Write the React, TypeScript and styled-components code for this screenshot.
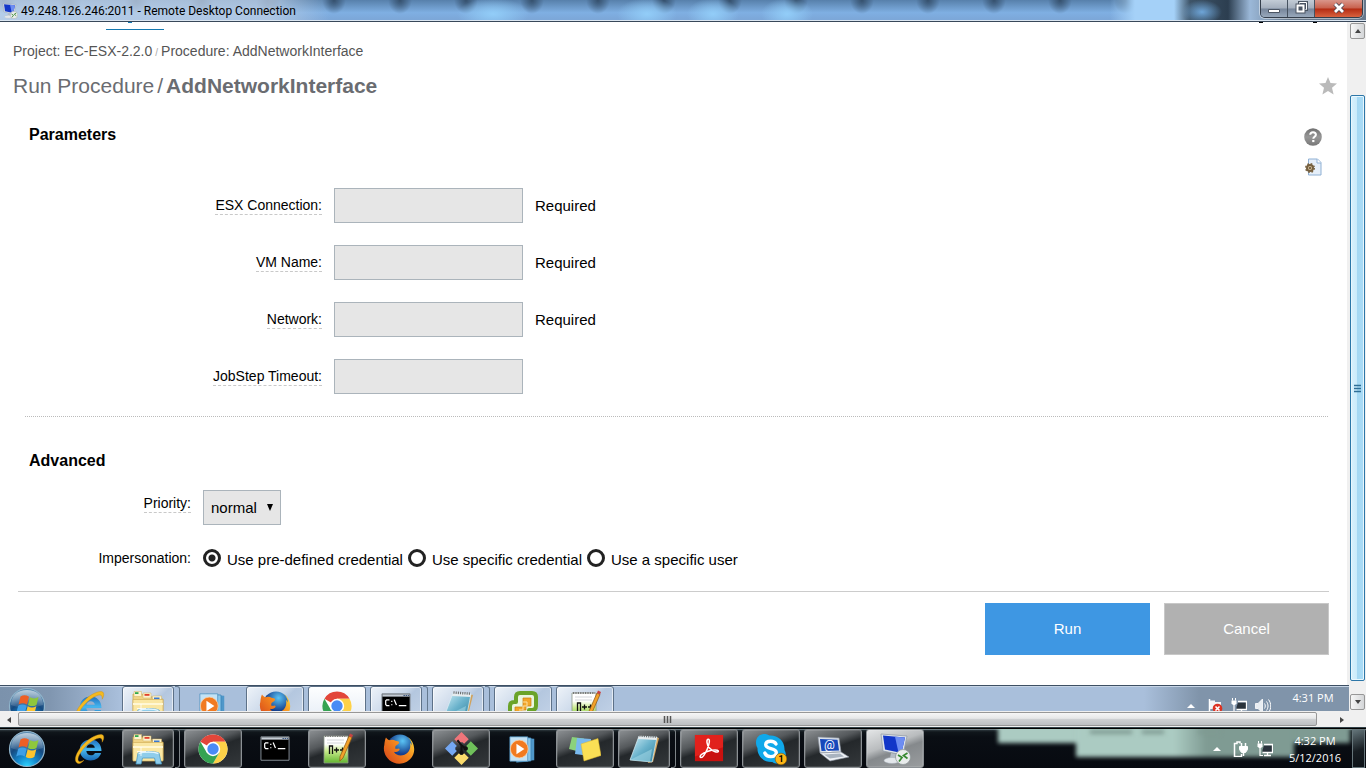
import React from "react";
import styled, { createGlobalStyle, css } from "styled-components";

const uiFont = `Roboto, "Open Sans", sans-serif`;
const clockFont = `"Open Sans", Roboto, sans-serif`;
const pageFont = `"Liberation Sans", Arial, sans-serif`;

const GlobalStyle = createGlobalStyle`
  *, *::before, *::after { box-sizing: border-box; }
  body { margin: 0; background: #fff; font-family: ${pageFont}; }
  button, input, select { font: inherit; margin: 0; padding: 0; border: 0; border-radius: 0; }
  svg { display: block; }
`;

const Desktop = styled.div`
  display: flex;
  flex-direction: column;
  min-height: 100vh;
  overflow: hidden;
`;

/* ---------- Window frame ---------- */

const TitleBar = styled.header`
  display: flex;
  align-items: flex-start;
  height: 22px;
  padding: 0 3px 0 2px;
  border-bottom: 1px solid #39485a;
  box-shadow: inset 0 -1px 0 #dbe6f1;
  background:
    linear-gradient(90deg, rgba(200, 216, 236, 0.75) 0, rgba(190, 208, 230, 0.75) 270px, transparent 330px),
    radial-gradient(ellipse 20px 12px at 1202px 12px, #6ea5d8, transparent),
    linear-gradient(90deg, transparent 1110px, #a5d1f8 1135px, #a5d1f8 1174px, #3e5468 1190px, #2c3e50 1228px, #9bb8d8 1250px, #66788c 1290px),
    radial-gradient(ellipse 36px 16px at 493px 14px, #92cdf8, transparent),
    radial-gradient(ellipse 30px 16px at 647px 14px, #92cdf8, transparent),
    radial-gradient(ellipse 26px 16px at 713px 14px, #92cdf8, transparent),
    radial-gradient(ellipse 26px 16px at 787px 14px, #92cdf8, transparent),
    radial-gradient(ellipse 12px 14px at 33px 0, #35506d, transparent) 433px 0 / 66px 22px repeat-x,
    linear-gradient(#5780ab, #7fafe2 60%, #7ba5d6);
`;

const TitleText = styled.h1`
  flex: 1;
  margin: 0 0 0 3px;
  font: 400 12px/22px ${uiFont};
  color: #000;
`;

const AppIcon = styled.span`
  margin-top: 3px;
`;

const CaptionButtons = styled.div`
  display: flex;
  height: 18px;
  border: 1px solid #343e4b;
  border-top: 0;
  border-radius: 0 0 5px 5px;
  overflow: hidden;
  box-shadow: 0 0 0 1px rgba(255, 255, 255, 0.45);
`;

const CaptionButton = styled.button<{ $danger?: boolean }>`
  display: flex;
  align-items: center;
  justify-content: center;
  width: ${(p) => (p.$danger ? 47 : 27)}px;
  padding-bottom: 2px;
  border-right: ${(p) => (p.$danger ? "0" : "1px solid #465260")};
  background: ${(p) =>
    p.$danger
      ? "linear-gradient(#d9968a, #c8604c 48%, #b32b12 52%, #d8623f)"
      : "linear-gradient(#c3ccd6, #a4afbd 48%, #76859a 52%, #98a8bb)"};
`;

const Body = styled.div`
  display: flex;
  flex: 1;
`;

const RemoteScreen = styled.div`
  display: flex;
  flex: 1;
  flex-direction: column;
  min-width: 0;
`;

/* ---------- Scroll bars ---------- */

const VerticalBar = styled.div`
  display: flex;
  flex-direction: column;
  width: 17px;
  padding: 1px 1px;
  background: #f0f0f0;
`;

const ArrowButton = styled.button<{ $flat?: boolean }>`
  display: flex;
  align-items: center;
  justify-content: center;
  width: ${(p) => (p.$flat ? 17 : 15)}px;
  height: 16px;
  background: ${(p) => (p.$flat ? "transparent" : "linear-gradient(90deg, #f6f6f6, #d4d6d8)")};
  border: ${(p) => (p.$flat ? "0" : "1px solid #979797")};
  border-radius: 2px;
`;

const VerticalThumb = styled.div`
  display: flex;
  flex: 1;
  align-items: center;
  justify-content: center;
  margin: 56px 0 13px;
  border: 1px solid #2d77a8;
  border-radius: 2px;
  box-shadow: inset 0 0 0 1px #e8f7fe;
  background: linear-gradient(90deg, #d9f1fd 0, #cbebfb 45%, #a6d8f3 50%, #a9dcf7 100%);
`;

const HorizontalBar = styled.div`
  display: flex;
  height: 17px;
  padding-top: 1px;
  border-bottom: 1px solid #2f3f46;
  background: #f0f0f0;
`;

const HorizontalThumb = styled.div`
  display: flex;
  flex: 1;
  align-items: center;
  justify-content: center;
  height: 14px;
  margin: 0 16px 0 1px;
  border: 1px solid #979797;
  border-radius: 2px;
  background: linear-gradient(#f6f6f6, #e6e7e8 45%, #cfd1d3 50%, #bcbfc2);
`;

const Corner = styled.div`
  width: 16px;
`;

/* ---------- Web page ---------- */

const Page = styled.main`
  flex: 1;
  padding: 0 18px 30px 13px;
  border-right: 2px solid #f0f0f0;
  background: #fff;
  font-size: 15px;
  line-height: 20px;
  color: #000;
`;

const NavEdge = styled.div`
  display: flex;
  align-items: flex-start;
  height: 8px;
`;

const ActiveTab = styled.div`
  display: flex;
  justify-content: center;
  width: 58px;
  height: 8px;
  margin: 0 auto 0 93px;
  padding-right: 10px;
  border-bottom: 1px solid #1478b0;
`;

const Speck = styled.i<{ $color: string; $gap?: number }>`
  width: 4px;
  height: 1px;
  margin-right: ${(p) => p.$gap ?? 0}px;
  background: ${(p) => p.$color};
`;

const Breadcrumb = styled.nav`
  margin-top: 11px;
  font-size: 14px;
  color: #555;

  a { color: inherit; text-decoration: none; }
  span { margin: 0 3px; font-size: 10px; color: #aaa; }
`;

const Heading = styled.div`
  display: flex;
  align-items: center;
  justify-content: space-between;
  margin: 11px -8px 0 0;
`;

const HeadingText = styled.h2`
  margin: 0;
  font-size: 21px;
  font-weight: 400;
  line-height: 24px;
  color: #6a6c71;

  span { margin: 0 3px; }
`;

const IconButton = styled.button`
  display: block;
  background: none;
`;

const Section = styled.section<{ $top: number }>`
  display: flex;
  margin-top: ${(p) => p.$top}px;
  padding-left: 16px;
`;

const SectionMain = styled.div`
  flex: 1;
`;

const SectionTitle = styled.h3`
  margin: 0;
  font-size: 16px;
  line-height: 20px;
`;

const SectionTools = styled.div`
  display: flex;
  flex-direction: column;
  gap: 12px;
  padding: 3px 7px 0 0;
`;

const ParameterList = styled.div`
  display: flex;
  flex-direction: column;
  gap: 22px;
  margin-top: 43px;
`;

const Field = styled.div<{ $labelWidth: number; $top?: number }>`
  display: grid;
  grid-template-columns: ${(p) => p.$labelWidth}px auto 1fr;
  align-items: center;
  column-gap: 12px;
  margin-top: ${(p) => p.$top ?? 0}px;
`;

const Label = styled.label<{ $plain?: boolean; $raised?: boolean }>`
  justify-self: end;
  margin-bottom: ${(p) => (p.$raised ? 8 : 0)}px;
  font-size: 14px;
  line-height: 18px;
  white-space: nowrap;
  border-bottom: ${(p) => (p.$plain ? "0" : "1px dashed #c9c9c9")};
`;

const TextInput = styled.input`
  width: 189px;
  height: 35px;
  padding: 0 8px;
  border: 1px solid #abb4bb;
  background: #e6e6e6;
`;

const SelectBox = styled.div`
  position: relative;

  &::after {
    content: "";
    position: absolute;
    top: 14px;
    right: 8px;
    border: 3px solid transparent;
    border-top: 7px solid #000;
    border-bottom: 0;
    pointer-events: none;
  }
`;

const Select = styled.select`
  appearance: none;
  display: block;
  width: 78px;
  height: 35px;
  padding: 0 7px;
  border: 1px solid #abb4bb;
  background: #e6e6e6;
  color: #000;
`;

const DottedRule = styled.hr`
  height: 0;
  margin: 22px 1px 0 12px;
  border: 0;
  border-top: 1px dotted #bbb;
`;

const SolidRule = styled.hr`
  height: 0;
  margin: 23px 0 0 5px;
  border: 0;
  border-top: 1px solid #ccc;
`;

const RadioRow = styled.div`
  display: flex;
  gap: 5px;
`;

const RadioLabel = styled.label`
  display: flex;
  align-items: center;
  gap: 6px;
  height: 20px;
  white-space: nowrap;

  span { padding-top: 3px; }
`;

const Radio = styled.input`
  appearance: none;
  width: 18px;
  height: 18px;
  border: 3px solid #222;
  border-radius: 50%;
  background: #fff;

  &:checked {
    background: radial-gradient(circle, #222 0, #222 3px, #fff 4px);
  }
`;

const Actions = styled.div`
  display: flex;
  justify-content: flex-end;
  gap: 14px;
  margin-top: 11px;
`;

const ActionButton = styled.button<{ $primary?: boolean }>`
  width: 165px;
  height: 52px;
  border: 1px solid ${(p) => (p.$primary ? "#3e97e3" : "#c8c8c8")};
  background: ${(p) => (p.$primary ? "#3e97e3" : "#b1b1b1")};
  color: #fff;
`;

/* ---------- Task bars ---------- */

const barDark = css`
  background: linear-gradient(#39454b, #10161b 3px, #0a0e14 8px, #070a10);
`;

const barLight = css`
  background:
    linear-gradient(90deg, #7b92ac 0, #8096b0 50px, transparent 120px),
    linear-gradient(270deg, #8094aa 0, #8094aa 150px, transparent 205px),
    #a9bfdb;
`;

const TaskClip = styled.div`
  height: 26px;
  overflow: hidden;
`;

const TaskBarBox = styled.footer<{ $light?: boolean }>`
  position: relative;
  display: flex;
  height: 40px;
  border-top: 1px solid ${(p) => (p.$light ? "#3d4f63" : "#000")};
  box-shadow: inset 0 1px 0 ${(p) => (p.$light ? "#c7d5e6" : "#6c7a80")};
  ${(p) => (p.$light ? barLight : barDark)}
`;

const Glow = styled.div`
  position: absolute;
  inset: 0;
  overflow: hidden;
`;

const GlowPatch = styled.i<{ $right: number; $top: number; $width: number; $height: number; $fill: string }>`
  position: absolute;
  top: ${(p) => p.$top}px;
  right: ${(p) => p.$right}px;
  width: ${(p) => p.$width}px;
  height: ${(p) => p.$height}px;
  background: ${(p) => p.$fill};
  filter: blur(2px);
`;

const StartButton = styled.button`
  display: flex;
  align-items: center;
  width: 60px;
  padding-left: 8px;
  background: none;
`;

const Tasks = styled.div`
  display: flex;
  flex: 1;
  gap: 4px;
`;

type Look = "none" | "open" | "stack" | "active";

const TaskSlot = styled.div<{ $light?: boolean; $look: Look }>`
  display: flex;
  gap: 1px;
  width: 58px;

  &::after {
    content: "";
    display: ${(p) => (p.$look === "stack" ? "block" : "none")};
    width: 5px;
    border: 1px solid ${(p) => (p.$light ? "#64798f" : "#7d8387")};
    border-left: 0;
    border-radius: 0 3px 3px 0;
  }
`;

const openDark = "linear-gradient(160deg, #8d9194 0, #55595c 35%, #24282b 50%, #34383b 100%)";
const activeDark = "linear-gradient(160deg, #e4e6e7 0, #b9bcbe 40%, #85898c 55%, #9a9d9f 100%)";
const openLight = "linear-gradient(135deg, #eef3f9 0, #c9d7e9 45%, #b4c7df 55%, #c5d4e8 100%)";
const activeLight = "linear-gradient(#fdfeff, #e3ebf5)";

const TaskButton = styled.button<{ $light?: boolean; $look: Look }>`
  display: flex;
  flex: 1;
  align-items: center;
  justify-content: center;
  background: none;
  ${(p) =>
    p.$look !== "none" &&
    css`
      border: 1px solid ${p.$light ? "#5d7188" : "#8b9094"};
      border-radius: 3px;
      box-shadow: inset 0 0 0 1px ${p.$light ? "rgba(255,255,255,.6)" : "rgba(255,255,255,.12)"};
      background: ${p.$look === "active" ? (p.$light ? activeLight : activeDark) : p.$light ? openLight : openDark};
    `}
`;

const Tray = styled.div<{ $right: number }>`
  position: relative;
  display: flex;
  align-items: center;
  gap: 8px;
  padding-right: ${(p) => p.$right}px;
`;

const TrayToggle = styled.button`
  margin-right: 4px;
  background: none;
`;

const Clock = styled.time`
  width: 68px;
  padding-top: 3px;
  font: 400 11px/17px ${clockFont};
  text-align: center;
  white-space: nowrap;
  color: #fff;
  align-self: flex-start;

  span { display: block; }
`;

const ShowDesktop = styled.button`
  position: relative;
  width: 13px;
  margin-right: 1px;
  border: 1px solid #66757a;
  background: linear-gradient(160deg, #64757a, #171d22 55%, #0d1217);
`;

/* ---------- Icons ---------- */

const Icon = ({ children, size = 32 }: { children: React.ReactNode; size?: number }) => (
  <svg width={size} height={size} viewBox="0 0 32 32" aria-hidden="true">{children}</svg>
);

const StartOrb = () => (
  <svg width="38" height="38" viewBox="0 0 38 38" aria-hidden="true">
    <defs>
      <radialGradient id="orb" cx=".5" cy="1" r="1">
        <stop offset="0" stopColor="#2fd6ff" />
        <stop offset=".3" stopColor="#1488cd" />
        <stop offset=".6" stopColor="#164a80" />
        <stop offset="1" stopColor="#5f8fb3" />
      </radialGradient>
      <linearGradient id="orbShine" x2="0" y2="1">
        <stop offset="0" stopColor="#fff" stopOpacity=".6" />
        <stop offset="1" stopColor="#fff" stopOpacity=".08" />
      </linearGradient>
    </defs>
    <circle cx="19" cy="19" r="17.5" fill="url(#orb)" stroke="#8fb4cb" strokeWidth="1.2" />
    <path d="M3 18C3 8 10 3 19 3s16 5 16 15c-8 3-22 4-32 0z" fill="url(#orbShine)" />
    <path d="M12.500 9.500c3-1.800 5.500-1.600 8.500.2L19 17.500c-3-1.700-5.600-1.600-8.400-.1z" fill="#ee5f25" />
    <path d="M22 10.300c3 1.600 5.500 1.500 8.500-.2l-2 7.800c-3 1.600-5.500 1.600-8.500 0z" fill="#8fc73c" />
    <path d="M10.200 18.700c2.800-1.600 5.400-1.500 8.500.1l-2 7.700c-3-1.700-5.600-1.600-8.500-.1z" fill="#3f9fe6" />
    <path d="M19.700 19.200c3 1.600 5.500 1.600 8.600 0l-2 7.700c-3 1.700-5.600 1.600-8.600 0z" fill="#fdc42f" />
  </svg>
);

const IeIcon = () => (
  <Icon>
    <defs>
      <linearGradient id="ie" x2="0" y2="1">
        <stop offset="0" stopColor="#1e6fc0" /><stop offset=".5" stopColor="#47b7ef" /><stop offset="1" stopColor="#1667b4" />
      </linearGradient>
    </defs>
    <path d="M17.500 6.500c6.500 0 11 4.500 11 11.500H13.300c.3 2.800 2.200 4.300 4.600 4.300 2 0 3.300-.8 4-2.300h6.200c-1.400 4.600-5.300 7.500-10.400 7.500-6.200 0-10.900-4.300-10.900-10.400S11.500 6.500 17.500 6.500zm-4 8.300h8.300c-.3-2.300-1.900-3.600-4.100-3.600s-3.800 1.300-4.200 3.600z" fill="url(#ie)" />
    <path d="M5 30.500C-1 28 4 17 13 9 20 2.500 29-.5 30.500 3c.6 1.600 0 4-1.300 6.200C29.500 5.500 28 4 24 5.500 15 9 5 20.500 5 26.500c0 2.700 2.500 2.700 6 .8-2.500 2.500-4.500 3.700-6 3.200z" fill="#f4b91f" stroke="#c98a10" strokeWidth=".4" />
  </Icon>
);

const ExplorerIcon = () => (
  <Icon>
    <path d="M1 4h9l1.500 2H19l1 3h11v18H1z" fill="#f0d486" stroke="#c9a44a" strokeWidth=".7" />
    <path d="M2 1.500h7.500v5H2zM11 3h8v5h-8zM20.500 6h9v5h-9z" fill="#fdf4cf" stroke="#d2b362" strokeWidth=".5" />
    <path d="M3 2.200h3.500V4H3z" fill="#2ea84a" /><path d="M12.500 4h5v1.800h-5z" fill="#e0402c" /><path d="M22 7.500h5.500v1.800H22z" fill="#3978cf" />
    <path d="M1 9.500h30V28H1z" fill="#fae7a3" stroke="#d2b05a" strokeWidth=".7" />
    <path d="M1 14h30" stroke="#fff7d4" strokeWidth="2" />
    <path d="M6 20c5-2 16-2 21 0l2.500 11H24l-1.500-6h-12L9 31H4z" fill="#8fcdeb" stroke="#4d9bc4" strokeWidth=".8" />
    <path d="M6.500 20.500c5-2 15-2 20 0" stroke="#e2f6ff" strokeWidth="1.500" fill="none" />
    <path d="M9 14v9M5 18.500h9" stroke="#fff" strokeWidth=".8" />
  </Icon>
);

const ChromeIcon = () => (
  <Icon>
    <circle cx="16" cy="16" r="14.500" fill="#fff" />
    <path d="M16 16L3.440 8.750A14.500 14.500 0 0 1 28.560 8.750H16z" fill="#e2463a" />
    <path d="M28.560 8.750A14.500 14.500 0 0 1 16 30.500L22.300 19.600 16 8.750z" fill="#fdd148" />
    <path d="M3.440 8.750A14.500 14.500 0 0 0 16 30.500L22.300 19.600H16L9.700 19.600z" fill="#35a352" />
    <circle cx="16" cy="16" r="7.200" fill="#fff" />
    <circle cx="16" cy="16" r="5.700" fill="#4a8bf5" />
  </Icon>
);

const CmdIcon = () => (
  <Icon size={30}>
    <path d="M1 3h30v25H1z" fill="#000" stroke="#8a929b" />
    <path d="M1.500 3.500h29V6h-29z" fill="#c4ccd5" />
    <path d="M24 4.200h1.500v1H24zM26.300 4.200h1.500v1h-1.500zM28.600 4.200h1.200v1h-1.200z" fill="#35517b" />
    <path d="M9 9.500H6l-1 1v4l1 1h3M11.500 10.500v1.200M11.500 14v1.200M14 9l2.500 6M19 15.500h8" fill="none" stroke="#fff" strokeWidth="1.300" />
  </Icon>
);

const NppIcon = () => (
  <Icon>
    <defs>
      <linearGradient id="npp" x2="0" y2="1"><stop offset=".3" stopColor="#fff" /><stop offset=".55" stopColor="#c9eb8c" /><stop offset="1" stopColor="#62b52f" /></linearGradient>
    </defs>
    <path d="M3 3h24v27H3z" fill="url(#npp)" stroke="#8c9788" strokeWidth=".8" />
    <path d="M4 3h22" stroke="#777" strokeWidth="2" strokeDasharray="1.200 1.200" />
    <path d="M6 7h17M6 10h17" stroke="#c9cdd2" strokeWidth=".8" />
    <path d="M8.500 21v-8h3v8M13 17h5M15.500 14.500v5M19 17h5M21.500 14.500v5" fill="none" stroke="#111" strokeWidth="1.300" />
    <path d="M28 3l3 1.500L22 25l-3.200 3 .2-4.500z" fill="#f2a12a" stroke="#8a5311" strokeWidth=".7" />
    <path d="M28 3l1-2.500 3 1.500-1 2.500z" fill="#c74343" />
  </Icon>
);

const FirefoxIcon = () => (
  <Icon>
    <defs>
      <radialGradient id="ffGlobe" cx=".6" cy=".25"><stop offset="0" stopColor="#5bc4f5" /><stop offset="1" stopColor="#153f8e" /></radialGradient>
      <linearGradient id="ffFox" x1="1" x2="0" y2=".8"><stop offset="0" stopColor="#fde03d" /><stop offset=".45" stopColor="#f58b1f" /><stop offset="1" stopColor="#d94a1a" /></linearGradient>
    </defs>
    <circle cx="17" cy="14.500" r="13" fill="url(#ffGlobe)" />
    <path d="M3 4.500c1 1.500 2 2.500 4 2.800 2-.8 4-.5 5.500.5l3 .8c1 .7.500 2-.5 2.700l-2.500 1.700-.3 2.500c1 .5 2.500.2 3.700 0 1 .5 1 1.500-.4 2.600-1.600 1.300-3.600 1-4.600.6 2 3.700 6.600 4.600 10.600 3 4.500-2 6.600-6.500 5.500-11.700 1 .8 1.500 1.500 2 2.500-.5-4-2-6.500-4.500-8.500C31 8 33 16.500 29.500 23c-3.700 6.600-12 9.500-19 6.500C3.500 26.500-.5 19 1.300 12 1.600 9 2 6.500 3 4.500z" fill="url(#ffFox)" />
  </Icon>
);

const GitIcon = () => (
  <Icon size={33}>
    <path d="M16 0l7 7-4.500 4.500L17 10h-2l-1.500 1.500L9 7z" fill="#f0757a" />
    <path d="M25 9l7 7-7 7-4.500-4.500L22 17v-2l-1.500-1.500z" fill="#6fc05a" />
    <path d="M23 25l-7 7-7-7 4.500-4.500L15 22h2l1.500-1.500z" fill="#fadb6c" />
    <path d="M7 23l-7-7 7-7 4.500 4.500L10 15v2l1.500 1.500z" fill="#74a7f2" />
    <path d="M12 8l4 5v7M16 13l4 3" stroke="#111" strokeWidth="2" fill="none" />
    <circle cx="16" cy="20" r="2" fill="#111" /><circle cx="20" cy="16" r="2" fill="#111" />
  </Icon>
);

const WmpIcon = () => (
  <Icon size={30}>
    <path d="M12 4l16 1v23l-16 1z" fill="#4f97c9" />
    <path d="M9 3.500l15.500.8v24.400L9 30z" fill="#8cc7ea" stroke="#3b83b5" strokeWidth=".8" />
    <path d="M2 3h19v26H2z" fill="#c3e2f5" stroke="#4b90bf" strokeWidth=".8" />
    <circle cx="12" cy="16" r="9.500" fill="#f17a20" stroke="#fbd3a8" strokeWidth=".8" />
    <path d="M9 10.500v11l8.500-5.500z" fill="#fff" />
  </Icon>
);

const StickyIcon = () => (
  <Icon>
    <path d="M3 4l12 1.500-1.500 14L0 16z" fill="#8bd27c" />
    <path d="M8 5l14 1-1 17-15-2z" fill="#79b9ee" />
    <path d="M12 11l17-5.500 3 17L15 28z" fill="#fadf55" stroke="#e0b92e" strokeWidth=".5" />
  </Icon>
);

const NotepadIcon = () => (
  <Icon>
    <defs>
      <linearGradient id="pad" x2="1" y2="1"><stop offset="0" stopColor="#d4f0f8" /><stop offset=".5" stopColor="#6bb3cc" /><stop offset="1" stopColor="#2f7f9d" /></linearGradient>
    </defs>
    <path d="M27 4l4 1-6 24-5 1z" fill="#d1a25c" />
    <path d="M11 3l18 1-5 25-22-2z" fill="url(#pad)" stroke="#dceff5" strokeWidth=".7" />
    <path d="M11 3l18 1-.6 3L10 6z" fill="#e6ecef" />
    <path d="M11.500 2.500L28 3.700" stroke="#666" strokeWidth="2.500" strokeDasharray="1 1.200" />
    <path d="M2 27l22-11-2 13z" fill="#9fd5e4" opacity=".6" />
  </Icon>
);

const VmwareIcon = () => (
  <Icon>
    <path d="M13 3h12q4 0 4 4v9q0 4-4 4h-3v5q0 4-4 4H7q-4 0-4-4v-9q0-4 4-4h2V7q0-4 4-4z" fill="#eaf5e0" stroke="#6aa329" strokeWidth="4" strokeLinejoin="round" />
    <path d="M16 8h8v8h-5v4h-4v5H8v-8h8z" fill="#f2a52a" stroke="#c87c0e" strokeWidth=".7" />
    <path d="M16 12h4v4h-4v4h-4" stroke="#fde0a0" fill="none" />
  </Icon>
);

const AdobeIcon = () => (
  <Icon size={30}>
    <path d="M1 1h30v28H1z" fill="#c9110f" /><path d="M1 1h30v13L1 24z" fill="#e1211c" />
    <path d="M7 25c-2-1 2-5 8-6.700 5-1.500 11-1.800 11 0 0 2-6 .7-9.500-3.300C13.500 11.500 13 6 15 5.500c2.300-.3 1.500 5-.8 10.500C12 21 9 26 7 25z" fill="none" stroke="#fff" strokeWidth="1.600" />
  </Icon>
);

const SkypeIcon = () => (
  <Icon size={32}>
    <path d="M9 1c2.500 0 4 .7 5.500 1.500C23 2 30 8 29.500 17c1 1.500 1.300 3.200 1.300 5 0 5-4 8.500-8.500 8.500-1.800 0-3.500-.5-5-1.500C8.500 29.500 2 23 2.500 15 1.500 13.500 1 11.500 1 9.500 1 4.500 4.500 1 9 1z" fill="#10a8ea" />
    <path d="M21 11c-1-2-3-2.800-5.300-2.800-2.900 0-5 1.300-5 3.600 0 5 10.600 2.600 10.600 7.800 0 2.500-2.300 4-5.500 4-3 0-5-1.300-6-3.600" fill="none" stroke="#fff" strokeWidth="3.400" strokeLinecap="round" />
    <circle cx="26" cy="26" r="5.800" fill="#fdb515" stroke="#8b5c00" strokeWidth=".6" />
    <text x="26" y="29" fontSize="9" fontWeight="700" textAnchor="middle" fontFamily="Roboto, sans-serif">1</text>
  </Icon>
);

const MailIcon = () => (
  <Icon>
    <path d="M1 4l21 1 2 14-21 1z" fill="#d9dfe7" stroke="#8d96a3" strokeWidth=".6" />
    <path d="M3 6l17.500.8L22 17.500 4.500 18z" fill="#1748bb" />
    <text x="12.500" y="16" fontSize="12" fill="#fff" textAnchor="middle" fontFamily="Roboto, sans-serif">@</text>
    <path d="M3 20l21-1 8 5-19 4z" fill="#eef1f5" stroke="#8d96a3" strokeWidth=".6" />
    <path d="M7 21.500l16-1 4 3-14 2z" fill="#a9b3bf" />
  </Icon>
);

const RdpIcon = ({ size = 32 }: { size?: number }) => (
  <Icon size={size}>
    <path d="M2 1l26 2-4 19-20-4z" fill="#dfe4ea" stroke="#8b95a2" strokeWidth=".7" />
    <path d="M4 2.500l22 2L22.500 20 6 16.500z" fill="#1236c8" />
    <path d="M16 3.700l10 .8L22.500 20l-3-.6z" fill="#6d8df2" />
    <path d="M12 20l5 1-1 4h-5z" fill="#b4bcc6" /><ellipse cx="13" cy="27.500" rx="8" ry="3" fill="#e3e7eb" stroke="#a2abb5" strokeWidth=".5" />
    <circle cx="24" cy="24" r="7.500" fill="#e9ecec" stroke="#8e9698" strokeWidth=".7" />
    <path d="M19 22l4 2.500-3 4M28.500 20l-4 2.500 4 3" fill="none" stroke="#36892f" strokeWidth="1.700" />
  </Icon>
);

const StarIcon = () => (
  <svg width="18" height="18" viewBox="0 0 18 18" aria-hidden="true">
    <path d="M9 0l2.500 6 6.500.5-5 4.200 1.600 6.800L9 14l-5.600 3.500L5 10.700 0 6.500 6.500 6z" fill="#bababa" />
  </svg>
);

const HelpIcon = () => (
  <svg width="18" height="18" viewBox="0 0 18 18" aria-hidden="true">
    <defs><linearGradient id="help" x2="0" y2="1"><stop offset="0" stopColor="#6f6f6f" /><stop offset=".5" stopColor="#979797" /><stop offset="1" stopColor="#777" /></linearGradient></defs>
    <circle cx="9" cy="9" r="8.800" fill="url(#help)" />
    <path d="M6.200 6.800C6.300 5 7.500 4.200 9 4.200s2.900.9 2.900 2.500c0 2-2.600 2-2.600 4" fill="none" stroke="#fff" strokeWidth="2" />
    <path d="M8.200 12h2.200v2.100H8.200z" fill="#fff" />
  </svg>
);

const DocumentIcon = () => (
  <svg width="18" height="18" viewBox="0 0 18 18" aria-hidden="true">
    <path d="M4.500 1h9L17 4.500V17H4.500z" fill="#e6eff9" stroke="#8fb0d4" />
    <path d="M13 1v4h4" fill="#fff" stroke="#8fb0d4" />
    <circle cx="6" cy="10" r="3" fill="#d2bd98" stroke="#76603f" strokeWidth="2" />
    <circle cx="6" cy="10" r="4.300" fill="none" stroke="#76603f" strokeWidth="1.400" strokeDasharray="1.700 1.700" />
    <circle cx="6" cy="10" r="1" fill="#5d4a2d" />
  </svg>
);

const Arrow = ({ path, color = "#444" }: { path: string; color?: string }) => (
  <svg width="8" height="8" viewBox="0 0 8 8" aria-hidden="true"><path d={path} fill={color} /></svg>
);

const Grip = ({ vertical, color }: { vertical?: boolean; color: string }) => (
  <svg width="9" height="9" viewBox="0 0 9 9" aria-hidden="true">
    <path d={vertical ? "M1 1.500h7M1 4.500h7M1 7.500h7" : "M1.500 1v7M4.500 1v7M7.500 1v7"} stroke={color} strokeWidth="1.500" />
  </svg>
);

const TrayIcon = ({ children }: { children: React.ReactNode }) => (
  <svg width="16" height="16" viewBox="0 0 16 16" fill="none" stroke="#fff" aria-hidden="true">{children}</svg>
);

const FlagIcon = () => (
  <TrayIcon>
    <path d="M2.500 1v15" strokeWidth="1.500" />
    <path d="M3 2.500h5v1.500h6v7H3z" fill="#f2f4f6" stroke="none" />
    <circle cx="10.500" cy="10.500" r="4.800" fill="#dc3322" stroke="none" />
    <path d="M8.500 8.500l4 4M12.500 8.500l-4 4" strokeWidth="1.600" />
  </TrayIcon>
);

const NetworkIcon = () => (
  <TrayIcon>
    <path d="M7 4.500h8.500v7H5.500V9z" fill="#2a333c" stroke="none" />
    <path d="M1.500 0v2.500M4.500 0v2.500" />
    <path d="M.5 2.500h5v3l-1.500 1.500h-2L.5 5.500z" fill="#fff" stroke="none" />
    <path d="M3 6v8.500h3" strokeWidth="1.200" />
    <path d="M7 3.500h8.500v8H5.500M10.500 12v2.500M7 14.500h7" strokeWidth="1.300" />
  </TrayIcon>
);

const SoundIcon = () => (
  <TrayIcon>
    <path d="M.5 5.500H3L7.500 1v14L3 10.500H.5z" fill="#e8edf2" strokeWidth=".8" />
    <path d="M9.500 5.500c1 1.500 1 3.500 0 5M11.500 3.500c2 3 2 6 0 9M13.500 1.500c3 4 3 9 0 13" />
  </TrayIcon>
);

const PowerIcon = () => (
  <TrayIcon>
    <path d="M7 2.500V1H4v1.500H1.500v13h7V13" strokeWidth="1.500" />
    <path d="M8.500 2v4M12.500 2v4M10.500 11v4" strokeWidth="1.500" />
    <path d="M6.500 5.500h8v3l-2 3h-4l-2-3z" fill="#fff" />
  </TrayIcon>
);

/* ---------- Composition ---------- */

interface Task { name: string; look: Look; icon: React.ReactNode }

const remoteTasks: Task[] = [
  { name: "Internet Explorer", look: "none", icon: <IeIcon /> },
  { name: "Windows Explorer", look: "stack", icon: <ExplorerIcon /> },
  { name: "Media Player", look: "none", icon: <WmpIcon /> },
  { name: "Firefox", look: "open", icon: <FirefoxIcon /> },
  { name: "Chrome", look: "active", icon: <ChromeIcon /> },
  { name: "Command Prompt", look: "stack", icon: <CmdIcon /> },
  { name: "Notepad", look: "stack", icon: <NotepadIcon /> },
  { name: "vSphere Client", look: "open", icon: <VmwareIcon /> },
  { name: "Notepad++", look: "open", icon: <NppIcon /> },
];

const localTasks: Task[] = [
  { name: "Internet Explorer", look: "none", icon: <IeIcon /> },
  { name: "Windows Explorer", look: "stack", icon: <ExplorerIcon /> },
  { name: "Chrome", look: "open", icon: <ChromeIcon /> },
  { name: "Command Prompt", look: "none", icon: <CmdIcon /> },
  { name: "Notepad++", look: "open", icon: <NppIcon /> },
  { name: "Firefox", look: "none", icon: <FirefoxIcon /> },
  { name: "Git", look: "open", icon: <GitIcon /> },
  { name: "Media Player", look: "none", icon: <WmpIcon /> },
  { name: "Sticky Notes", look: "open", icon: <StickyIcon /> },
  { name: "Notepad", look: "stack", icon: <NotepadIcon /> },
  { name: "Adobe Reader", look: "open", icon: <AdobeIcon /> },
  { name: "Skype", look: "open", icon: <SkypeIcon /> },
  { name: "Mail", look: "open", icon: <MailIcon /> },
  { name: "Remote Desktop Connection", look: "active", icon: <RdpIcon /> },
];

const TaskList = ({ tasks, light }: { tasks: Task[]; light?: boolean }) => (
  <>
    <StartButton aria-label="Start"><StartOrb /></StartButton>
    <Tasks>
      {tasks.map((t) => (
        <TaskSlot key={t.name} $look={t.look} $light={light}>
          <TaskButton $look={t.look} $light={light} aria-label={t.name}>{t.icon}</TaskButton>
        </TaskSlot>
      ))}
    </Tasks>
  </>
);

const parameters = [
  { id: "connection", label: "ESX Connection:", required: true },
  { id: "vm", label: "VM Name:", required: true },
  { id: "network", label: "Network:", required: true },
  { id: "timeout", label: "JobStep Timeout:", required: false },
];

const credentials = ["Use pre-defined credential", "Use specific credential", "Use a specific user"];

const RunProcedure = () => (
  <Page>
    <NavEdge>
      <ActiveTab><Speck $color="#1478b0" /></ActiveTab>
      <Speck $color="#000" $gap={50} />
      <Speck $color="#000" $gap={12} />
    </NavEdge>
    <Breadcrumb>
      <a href="#project">Project: EC-ESX-2.2.0</a><span>/</span><a href="#procedure">Procedure: AddNetworkInterface</a>
    </Breadcrumb>
    <Heading>
      <HeadingText>Run Procedure<span>/</span><b>AddNetworkInterface</b></HeadingText>
      <IconButton aria-label="Favorite"><StarIcon /></IconButton>
    </Heading>

    <Section $top={27}>
      <SectionMain>
        <SectionTitle>Parameters</SectionTitle>
        <ParameterList>
          {parameters.map((p) => (
            <Field key={p.id} $labelWidth={293}>
              <Label htmlFor={p.id}>{p.label}</Label>
              <TextInput id={p.id} type="text" />
              {p.required && <span>Required</span>}
            </Field>
          ))}
        </ParameterList>
      </SectionMain>
      <SectionTools>
        <IconButton aria-label="Help"><HelpIcon /></IconButton>
        <IconButton aria-label="Procedure details"><DocumentIcon /></IconButton>
      </SectionTools>
    </Section>
    <DottedRule />

    <Section $top={34}>
      <SectionMain>
        <SectionTitle>Advanced</SectionTitle>
        <Field $labelWidth={162} $top={19}>
          <Label htmlFor="priority" $raised>Priority:</Label>
          <SelectBox>
            <Select id="priority" defaultValue="normal">
              <option value="normal">normal</option>
            </Select>
          </SelectBox>
        </Field>
        <Field $labelWidth={162} $top={23} role="radiogroup" aria-labelledby="impersonation">
          <Label as="span" id="impersonation" $plain>Impersonation:</Label>
          <RadioRow>
            {credentials.map((c, i) => (
              <RadioLabel key={c}>
                <Radio type="radio" name="credential" defaultChecked={i === 0} />
                <span>{c}</span>
              </RadioLabel>
            ))}
          </RadioRow>
        </Field>
      </SectionMain>
    </Section>
    <SolidRule />
    <Actions>
      <ActionButton $primary>Run</ActionButton>
      <ActionButton>Cancel</ActionButton>
    </Actions>
  </Page>
);

export default function App() {
  return (
    <Desktop>
      <GlobalStyle />
      <TitleBar>
        <AppIcon><RdpIcon size={16} /></AppIcon>
        <TitleText>49.248.126.246:2011 - Remote Desktop Connection</TitleText>
        <CaptionButtons>
          <CaptionButton aria-label="Minimize">
            <svg width="12" height="12"><path d="M.5 7.500h11v3H.5z" fill="#fff" stroke="#4b5563" /></svg>
          </CaptionButton>
          <CaptionButton aria-label="Restore">
            <svg width="13" height="13"><path d="M4.500 1.500h7v7h-7z" fill="none" stroke="#4b5563" strokeWidth="3" /><path d="M4.500 1.500h7v7h-7z" fill="none" stroke="#fff" /><path d="M2.500 4.500h6v6h-6z" fill="#4b5563" stroke="#4b5563" strokeWidth="4" /><path d="M2.500 4.500h6v6h-6z" fill="#4b5563" stroke="#fff" strokeWidth="2" /></svg>
          </CaptionButton>
          <CaptionButton aria-label="Close" $danger>
            <svg width="12" height="12"><path d="M2 2l8 8M10 2l-8 8" stroke="#4b4350" strokeWidth="4.500" /><path d="M2 2l8 8M10 2l-8 8" stroke="#fff" strokeWidth="2.800" /></svg>
          </CaptionButton>
        </CaptionButtons>
      </TitleBar>

      <Body>
        <RemoteScreen>
          <RunProcedure />
          <TaskClip>
            <TaskBarBox $light>
              <TaskList tasks={remoteTasks} light />
              <Tray $right={2}>
                <TrayToggle aria-label="Show hidden icons"><Arrow path="M0 6l4-4 4 4z" color="#fff" /></TrayToggle>
                <FlagIcon /><NetworkIcon /><SoundIcon />
                <Clock><span>4:31 PM</span><span>5/12/2016</span></Clock>
              </Tray>
            </TaskBarBox>
          </TaskClip>
        </RemoteScreen>
        <VerticalBar>
          <ArrowButton aria-label="Scroll up"><Arrow path="M1 6l3-4 3 4z" /></ArrowButton>
          <VerticalThumb><Grip vertical color="#2f6f98" /></VerticalThumb>
          <ArrowButton aria-label="Scroll down"><Arrow path="M1 2h6L4 6z" /></ArrowButton>
        </VerticalBar>
      </Body>

      <HorizontalBar>
        <ArrowButton $flat aria-label="Scroll left"><Arrow path="M6 1v6L2 4z" /></ArrowButton>
        <HorizontalThumb><Grip color="#555" /></HorizontalThumb>
        <ArrowButton $flat aria-label="Scroll right"><Arrow path="M2 1v6l4-3z" /></ArrowButton>
        <Corner />
      </HorizontalBar>

      <TaskBarBox>
        <Glow>
          <GlowPatch $top={-6} $right={16} $width={352} $height={20} $fill="linear-gradient(90deg, #abcbc2 55%, #7f9b93 65%)" />
          <GlowPatch $top={-6} $right={72} $width={218} $height={34} $fill="linear-gradient(90deg, #abcbc2 45%, #7f9b93 60%)" />
          <GlowPatch $top={1} $right={234} $width={42} $height={4} $fill="#7f9a92" />
          <GlowPatch $top={1} $right={202} $width={22} $height={4} $fill="#7f9a92" />
          <GlowPatch $top={1} $right={146} $width={22} $height={4} $fill="#7f9a92" />
        </Glow>
        <TaskList tasks={localTasks} />
        <Tray $right={3}>
          <TrayToggle aria-label="Show hidden icons"><Arrow path="M0 6l4-4 4 4z" color="#fff" /></TrayToggle>
          <PowerIcon /><NetworkIcon />
          <Clock><span>4:32 PM</span><span>5/12/2016</span></Clock>
        </Tray>
        <ShowDesktop aria-label="Show desktop" />
      </TaskBarBox>
    </Desktop>
  );
}
